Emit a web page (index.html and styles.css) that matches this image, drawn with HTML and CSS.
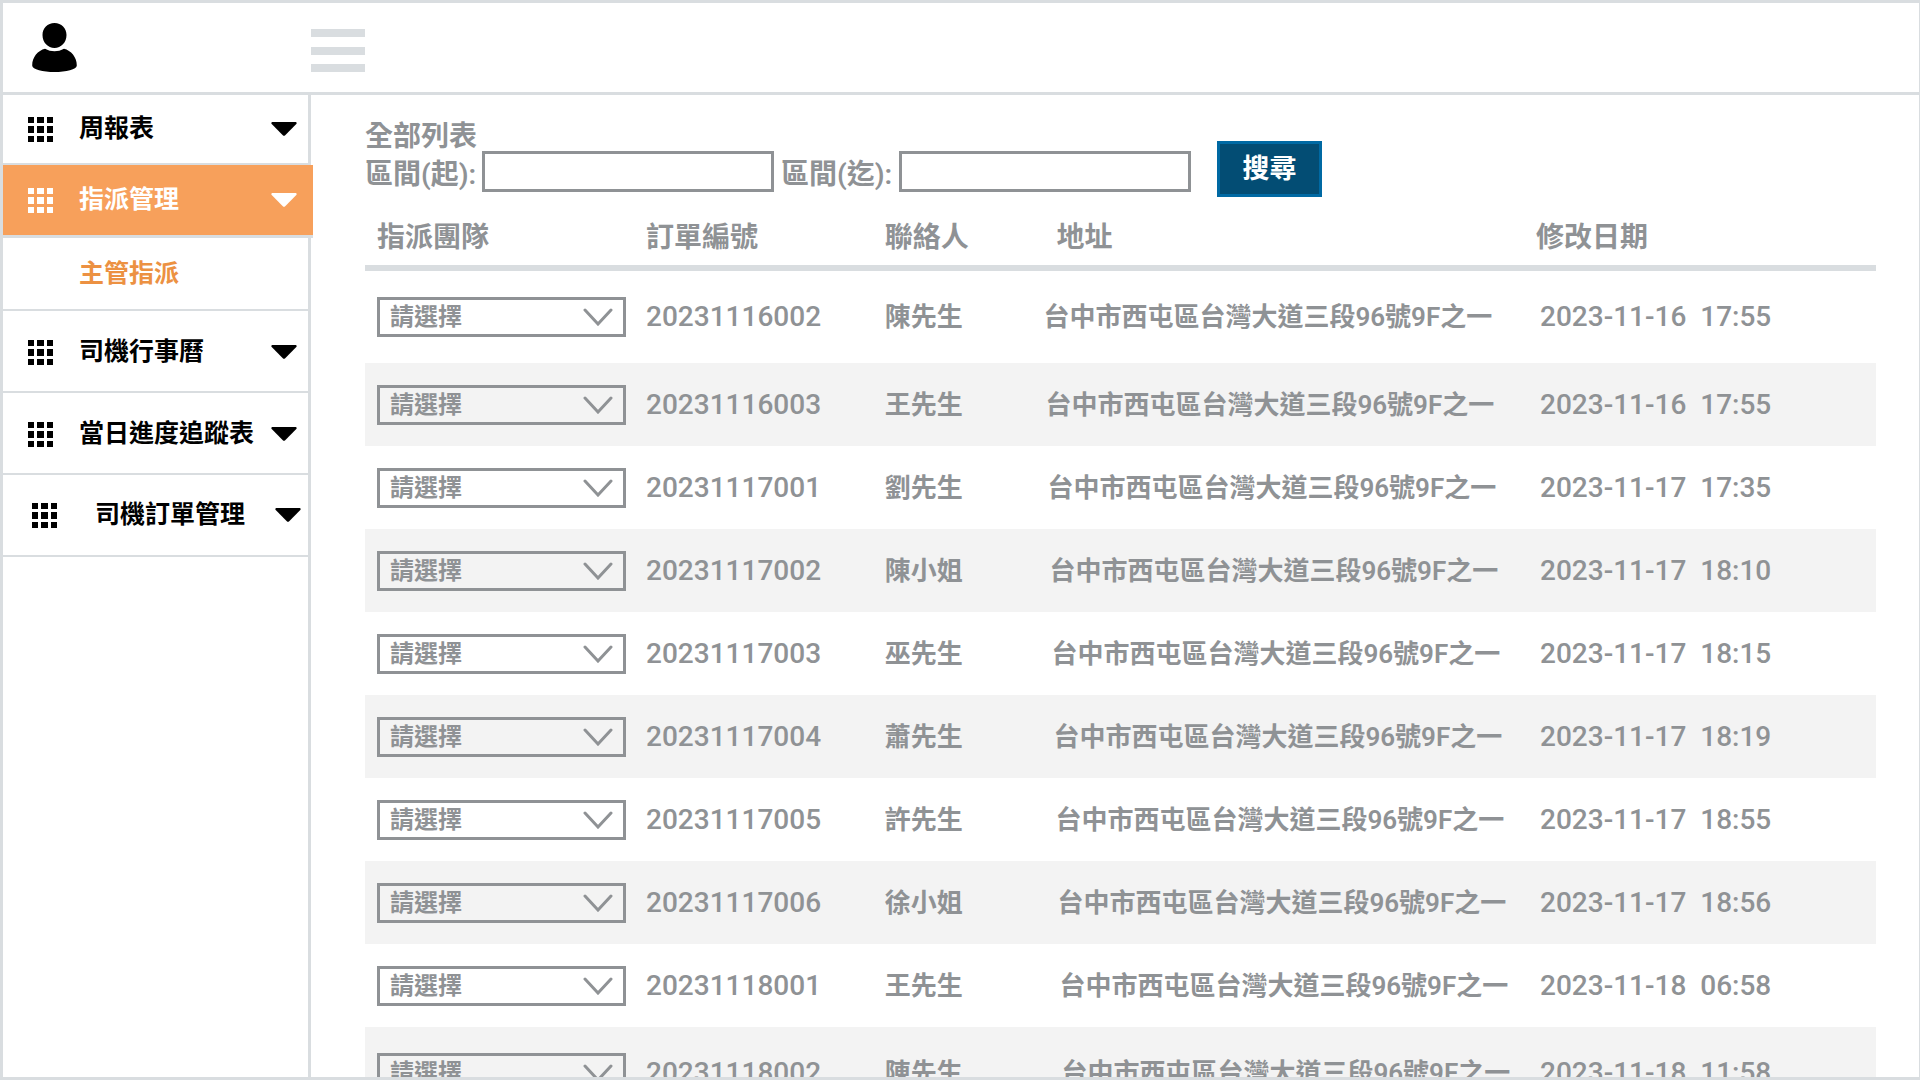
FILE: index.html
```html
<!DOCTYPE html>
<html lang="zh-Hant">
<head>
<meta charset="utf-8">
<meta name="viewport" content="width=device-width, initial-scale=1">
<title>主管指派</title>
<link rel="stylesheet" href="styles.css">
</head>
<body>
<svg class="defs" aria-hidden="true">
  <symbol id="grid" viewBox="0 0 25 25"><path d="M0 0h6v6H0zM9 0h7v6H9zM19 0h6v6h-6zM0 9h6v7H0zM9 9h7v7H9zM19 9h6v7h-6zM0 19h6v6H0zM9 19h7v6H9zM19 19h6v6h-6z"/></symbol>
  <symbol id="caret" viewBox="0 0 26 14"><path d="M1.200 0H24.800Q26.300.5 25.300 1.900L14.200 13.200Q13 14.300 11.800 13.200L.7 1.900Q-.3.5 1.200 0z"/></symbol>
  <symbol id="chevron" viewBox="0 0 30 18"><path d="M2 2l13 14L28 2" fill="none" stroke="currentColor" stroke-width="3" stroke-linecap="round"/></symbol>
</svg>
<div class="app">
  <header class="topbar">
    <a class="user" href="#" aria-label="使用者">
      <svg width="45" height="49" viewBox="0 0 45 49"><path d="M22.500 0C29.500 0 34.500 5 34.500 12C34.500 19.500 29 25 22.500 25S10.500 19.500 10.500 12C10.500 5 15.500 0 22.500 0zM13 25.800Q17.500 28.300 22.500 28.300T32 25.800C39 27.500 44.800 34 44.800 42.500C44.800 46.500 34 49 22.500 49S.2 46.500.2 42.500C.2 34 6 27.500 13 25.800z"/></svg>
    </a>
    <button class="burger" type="button" aria-label="選單"><span></span><span></span><span></span></button>
  </header>
  <div class="body">
    <nav class="sidebar">
      <a class="item" href="#"><svg class="grid"><use href="#grid"/></svg><span class="label">周報表</span><svg class="caret"><use href="#caret"/></svg></a>
      <a class="item active" href="#"><svg class="grid"><use href="#grid"/></svg><span class="label">指派管理</span><svg class="caret"><use href="#caret"/></svg></a>
      <a class="item sub" href="#"><span class="label">主管指派</span></a>
      <a class="item tall" href="#"><svg class="grid"><use href="#grid"/></svg><span class="label">司機行事曆</span><svg class="caret"><use href="#caret"/></svg></a>
      <a class="item tall" href="#"><svg class="grid"><use href="#grid"/></svg><span class="label">當日進度追蹤表</span><svg class="caret"><use href="#caret"/></svg></a>
      <a class="item tall indent" href="#"><svg class="grid"><use href="#grid"/></svg><span class="label">司機訂單管理</span><svg class="caret"><use href="#caret"/></svg></a>
    </nav>
    <main class="main">
      <form class="filter">
        <div class="filter-fields">
          <h1>全部列表</h1>
          <div class="range">
            <label for="from">區間(起):</label><input id="from" type="text">
            <label for="to">區間(迄):</label><input id="to" type="text">
          </div>
        </div>
        <button class="search" type="button">搜尋</button>
      </form>
      <table class="orders">
        <colgroup><col class="c-team"><col class="c-no"><col class="c-name"><col class="c-addr"><col></colgroup>
        <thead><tr><th class="team">指派團隊</th><th>訂單編號</th><th>聯絡人</th><th class="addr">地址</th><th>修改日期</th></tr></thead>
        <tbody id="rows"></tbody>
      </table>
    </main>
  </div>
</div>
<script src="app.js"></script>
</body>
</html>
```
FILE: styles.css
```css
:root {
  --line: #d9dde0;
  --gray: #8f9295;
  --stripe: #f3f3f3;
}

* { box-sizing: border-box; }

body {
  margin: 0;
  color: var(--gray);
  background: #fff;
  font-family: Roboto, "Noto Sans CJK TC", sans-serif;
  font-size: 26px;
  font-weight: 600;
  line-height: 32px;
}

a { color: inherit; text-decoration: none; }

.defs { position: absolute; width: 0; height: 0; }

.app {
  display: flex;
  flex-direction: column;
  height: 100vh;
  overflow: hidden;
  border: 3px solid var(--line);
  border-right-width: 1px;
}

/* Top bar */
.topbar {
  display: flex;
  flex: none;
  align-items: center;
  gap: 234px;
  height: 92px;
  padding-left: 29px;
  border-bottom: 3px solid var(--line);
}

.user { display: flex; color: #000; }

.burger {
  display: flex;
  flex-direction: column;
  justify-content: space-between;
  width: 54px;
  height: 43px;
  margin-top: 6px;
  padding: 0;
  border: 0;
  background: none;
}

.burger span { height: 8px; background: var(--line); }

.body { display: flex; flex: 1; min-height: 0; }

/* Side menu */
.sidebar {
  flex: none;
  width: 308px;
  border-right: 3px solid var(--line);
  color: #000;
  font-size: 25px;
  font-weight: 700;
}

.item {
  display: flex;
  align-items: center;
  height: 70px;
  padding: 0 11px 0 25px;
  border-bottom: 2px solid var(--line);
}

.item svg { flex: none; fill: currentColor; }
.grid { width: 25px; height: 25px; margin-right: 26px; }
.caret { width: 26px; height: 14px; }
.label { flex: 1; white-space: nowrap; }

.item.active {
  height: 73px;
  margin-right: -5px;
  padding-right: 16px;
  border-bottom-width: 3px;
  background: #f7a05b;
  background-clip: padding-box;
  color: #fff;
}

.item.sub { height: 73px; padding-left: 76px; color: #ec9142; }
.item.tall { height: 82px; padding-top: 2px; }
.item.indent { padding: 0 7px 0 29px; }
.item.indent .grid { margin-right: 38px; }

/* Content */
.main { flex: 1; min-width: 0; padding: 28px 43px 0 54px; }

.filter { display: flex; align-items: flex-end; gap: 26px; }
.filter-fields { padding-bottom: 5px; }

h1 {
  margin: 0;
  font-size: 28px;
  font-weight: inherit;
  line-height: 28px;
}

.range { display: flex; align-items: center; font-size: 28px; }
.range label { flex: none; width: 117px; padding-top: 6px; white-space: nowrap; }

.range input {
  width: 292px;
  height: 41px;
  padding: 0 8px;
  border: 3px solid var(--gray);
  background: #fff;
  color: inherit;
  font: inherit;
}

.range input + label { width: 118px; margin-left: 7px; }

.search {
  width: 105px;
  height: 56px;
  padding: 0;
  border: 3px solid #0069a3;
  background: #034d74;
  color: #fff;
  font: inherit;
  font-size: 27px;
  font-weight: 700;
}

.orders {
  width: 100%;
  border-spacing: 0;
  table-layout: fixed;
}

.c-team { width: 18.6%; }
.c-no { width: 15.8%; }
.c-name { width: 10.5%; }
.c-addr { width: 32.6%; }

th {
  height: 74px;
  padding: 14px 0 0;
  border-bottom: 6px solid var(--line);
  font-size: 28px;
  font-weight: inherit;
  text-align: left;
}

th.team, td.team { padding-left: 12px; }
th.addr { padding-left: 13px; }

td { height: 83px; padding: 0; white-space: pre; }
td.number, td.date { font-size: 28px; font-weight: 500; }
td.date { padding-left: 4px; }
tbody tr:first-child td,
tbody tr:last-child td { height: 92px; }
tbody tr:nth-child(even) { background: var(--stripe); }

/* Addresses step to the right from one row to the next */
td.addr { padding-left: calc(var(--row) * 2px); }

.select { position: relative; display: flex; width: 249px; }

.select select {
  width: 100%;
  height: 40px;
  padding: 0 10px;
  border: 3px solid var(--gray);
  border-radius: 0;
  appearance: none;
  background: transparent;
  color: inherit;
  font: inherit;
  font-size: 24px;
}

.select svg {
  position: absolute;
  top: 11px;
  right: 13px;
  width: 30px;
  height: 18px;
  pointer-events: none;
}
```
FILE: app.js
```js
const address = '台中市西屯區台灣大道三段96號9F之一';
const orders = [
  ['20231116002', '陳先生', '2023-11-16  17:55'],
  ['20231116003', '王先生', '2023-11-16  17:55'],
  ['20231117001', '劉先生', '2023-11-17  17:35'],
  ['20231117002', '陳小姐', '2023-11-17  18:10'],
  ['20231117003', '巫先生', '2023-11-17  18:15'],
  ['20231117004', '蕭先生', '2023-11-17  18:19'],
  ['20231117005', '許先生', '2023-11-17  18:55'],
  ['20231117006', '徐小姐', '2023-11-17  18:56'],
  ['20231118001', '王先生', '2023-11-18  06:58'],
  ['20231118002', '陳先生', '2023-11-18  11:58']
];

document.getElementById('rows').innerHTML = orders.map(([no, name, date], i) =>
  `<tr style="--row:${i}">` +
  `<td class="team"><div class="select"><select aria-label="指派團隊 ${no}"><option>請選擇</option></select><svg><use href="#chevron"/></svg></div></td>` +
  `<td class="number">${no}</td><td>${name}</td><td class="addr">${address}</td><td class="date">${date}</td></tr>`
).join('');
```
